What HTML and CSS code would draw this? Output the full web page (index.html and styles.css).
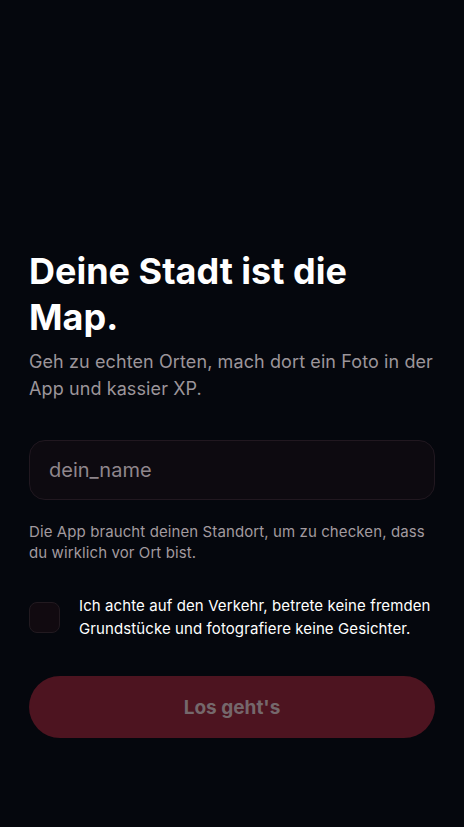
FILE: index.html
```html
<!DOCTYPE html>
<html lang="de">
<head>
    <meta charset="UTF-8">
    <meta name="viewport" content="width=device-width, initial-scale=1.0">
    <title>Deine Stadt ist die Map</title>
    <link rel="stylesheet" href="styles.css">
</head>
<body>

<main class="onboarding">
    <h1 class="title">Deine Stadt ist die Map.</h1>
    <p class="lead">Geh zu echten Orten, mach dort ein Foto in der App und kassier XP.</p>

    <form class="signup" onsubmit="event.preventDefault()">
        <input type="text" class="name-input" placeholder="dein_name">
        <p class="hint">Die App braucht deinen Standort, um zu checken, dass du wirklich vor Ort bist.</p>

        <label class="consent">
            <input type="checkbox" class="consent-box">
            <span class="consent-text">Ich achte auf den Verkehr, betrete keine fremden Grundstücke und fotografiere keine Gesichter.</span>
        </label>

        <button type="submit" class="btn" disabled>Los geht's</button>
    </form>
</main>

</body>
</html>
```

FILE: styles.css
```css
html, body {
    height: 100%;
}
body {
    margin: 0;
    background-color: #05070d;
    color: #fff;
    font-family: Inter, "Noto Sans", sans-serif;
}
.onboarding {
    box-sizing: border-box;
    min-height: 100%;
    padding: 0 29px 89px;
    display: flex;
    flex-direction: column;
    justify-content: flex-end;
}
.title {
    margin: 0;
    font-size: 36px;
    line-height: 46px;
    font-weight: 700;
}
.lead {
    margin: 8px 0 0;
    font-size: 18px;
    line-height: 27px;
    letter-spacing: 0.1px;
    color: #9c959a;
}
.signup {
    margin-top: 38px;
    display: flex;
    flex-direction: column;
}
.name-input {
    box-sizing: border-box;
    width: 100%;
    height: 60px;
    padding: 0 19px;
    border: 1px solid #211820;
    border-radius: 16px;
    background-color: #0d0a10;
    color: #fff;
    font-family: inherit;
    font-size: 20px;
    outline: none;
}
.name-input::placeholder {
    color: #8f868c;
}
.hint {
    margin: 21px 0 0;
    font-size: 15px;
    line-height: 21px;
    letter-spacing: 0.1px;
    color: #a29a9f;
}
.consent {
    margin-top: 31px;
    display: flex;
    align-items: center;
    gap: 19px;
}
.consent-box {
    appearance: none;
    flex: none;
    box-sizing: border-box;
    width: 31px;
    height: 31px;
    margin: 0;
    border: 1px solid #221a20;
    border-radius: 8px;
    background-color: #110a10;
}
.consent-text {
    font-size: 15px;
    line-height: 23px;
    letter-spacing: 0.1px;
    color: #fff;
}
.btn {
    margin-top: 36px;
    width: 100%;
    height: 62px;
    border: none;
    border-radius: 31px;
    background-color: #4d1420;
    color: #75686c;
    font-family: inherit;
    font-size: 19px;
    font-weight: 700;
}
```
